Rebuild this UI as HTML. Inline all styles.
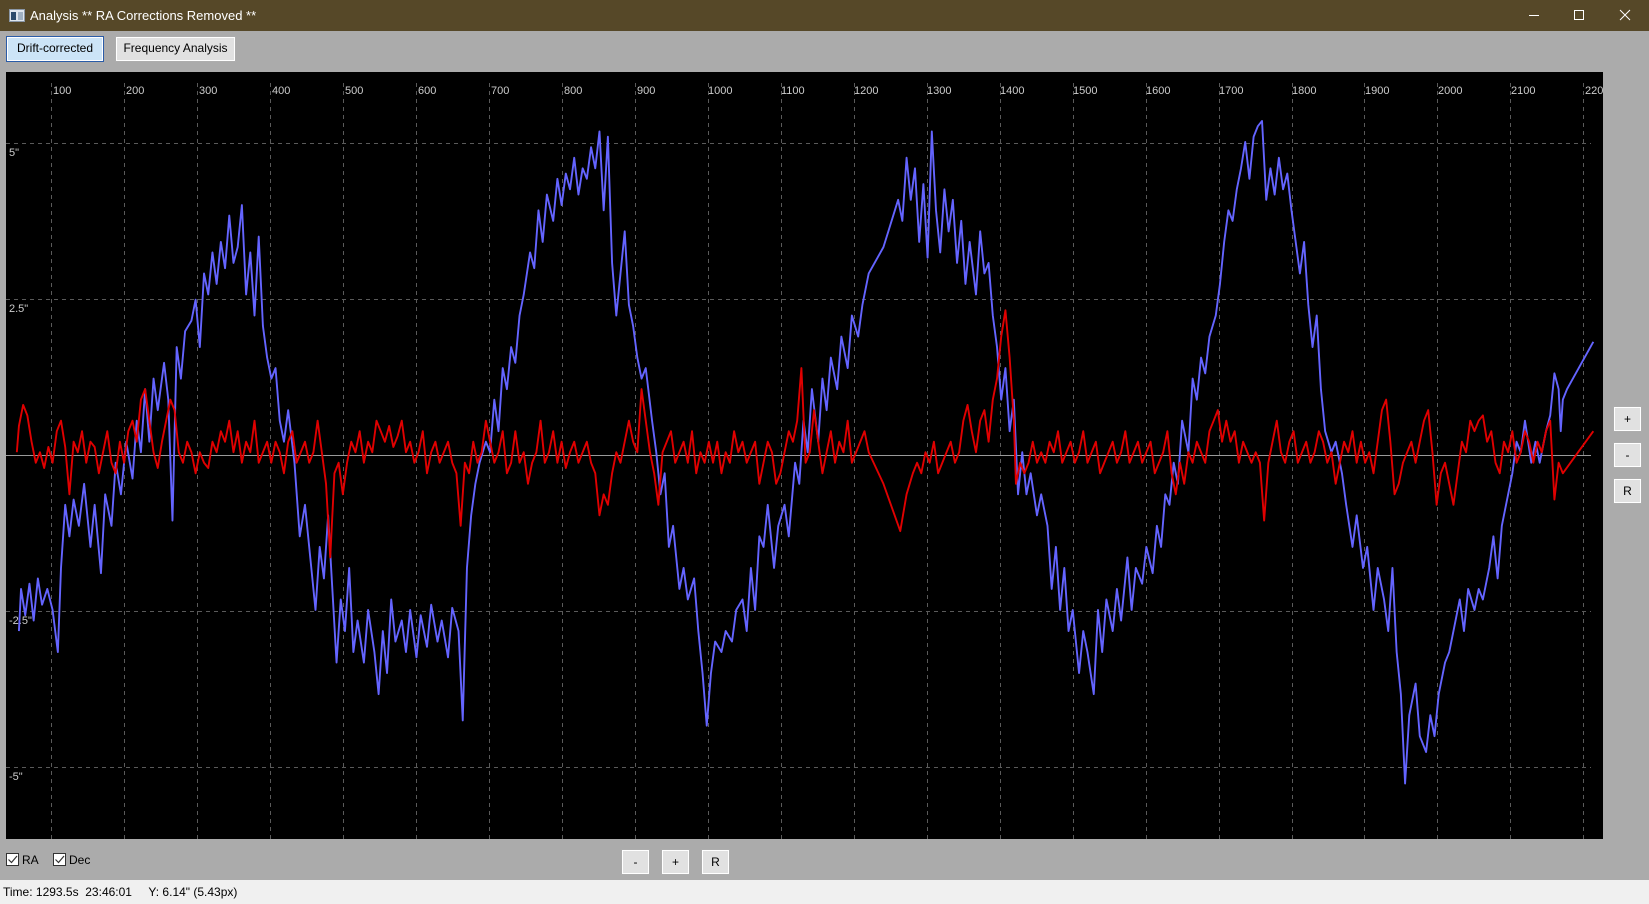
<!DOCTYPE html>
<html><head><meta charset="utf-8"><style>
*{margin:0;padding:0;box-sizing:border-box}
body{width:1649px;height:904px;background:#ababab;position:relative;overflow:hidden;font-family:"Liberation Sans",sans-serif;font-size:12px;color:#000}
.title{position:absolute;left:0;top:0;width:1649px;height:31px;background:#564828;color:#fff;font-size:13px}
.title .t{position:absolute;left:30px;top:8px}
.btn{position:absolute;background:#e1e1e1;border:1px solid #adadad;box-shadow:inset 0 0 0 1px #fff;font-size:12px;text-align:center}
.chart{position:absolute;left:6px;top:72px;width:1597px;height:767px;background:#000}
.status{position:absolute;left:0;top:880px;width:1649px;height:24px;background:#f0f0f0;font-size:12px}
.cb{position:absolute;width:13px;height:13px;border:1px solid #333;background:#fff}
</style></head><body>
<div class="title">
<svg style="position:absolute;left:9px;top:9px" width="16" height="13"><rect x="0.5" y="0.5" width="15" height="12" fill="#dfe6ee" stroke="#8a97a6"/><rect x="2" y="3" width="5" height="8" fill="#2b4a6b"/><rect x="9" y="3" width="5" height="8" fill="#9fb0c2"/></svg>
<span class="t">Analysis ** RA Corrections Removed **</span>
<svg style="position:absolute;left:1520px;top:8px" width="120" height="16" stroke="#fff" fill="none" stroke-width="1"><line x1="9" y1="7.5" x2="19" y2="7.5"/><rect x="54.5" y="2.5" width="9" height="9"/><path d="M100 2 L110 12 M110 2 L100 12"/></svg>
</div>
<div class="btn" style="left:6px;top:36px;width:98px;height:26px;background:#cce4f7;border-color:#2a5ca8;line-height:23px">Drift-corrected</div>
<div class="btn" style="left:115px;top:36px;width:121px;height:26px;line-height:23px">Frequency Analysis</div>
<div class="chart"></div>
<svg style="position:absolute;left:0;top:0" width="1649" height="904">
<g stroke="#5a5a5a" stroke-width="1" stroke-dasharray="4,4" fill="none">
<path d="M51.5 83V839M124.5 83V839M197.5 83V839M270.5 83V839M343.5 83V839M416.5 83V839M489.5 83V839M562.5 83V839M635.5 83V839M708.5 83V839M781.5 83V839M854.5 83V839M927.5 83V839M1000.5 83V839M1073.5 83V839M1146.5 83V839M1219.5 83V839M1292.5 83V839M1364.5 83V839M1437.5 83V839M1510.5 83V839M1583.5 83V839"/>
<path d="M6 143.5H1591M6 299.5H1591M6 611.5H1591M6 767.5H1591"/>
</g>
<line x1="6" y1="455.5" x2="1591" y2="455.5" stroke="#999" stroke-width="1"/>
<g fill="#ccc" font-size="11" font-family="Liberation Sans,sans-serif">
<text x="53" y="94">100</text><text x="126" y="94">200</text><text x="199" y="94">300</text><text x="272" y="94">400</text><text x="345" y="94">500</text><text x="418" y="94">600</text><text x="491" y="94">700</text><text x="564" y="94">800</text><text x="637" y="94">900</text><text x="708" y="94">1000</text><text x="781" y="94">1100</text><text x="854" y="94">1200</text><text x="927" y="94">1300</text><text x="1000" y="94">1400</text><text x="1073" y="94">1500</text><text x="1146" y="94">1600</text><text x="1219" y="94">1700</text><text x="1292" y="94">1800</text><text x="1365" y="94">1900</text><text x="1438" y="94">2000</text><text x="1511" y="94">2100</text><text x="1585" y="94">220</text>
<text x="9" y="156">5"</text><text x="9" y="312">2.5"</text><text x="9" y="624">-2.5"</text><text x="9" y="780">-5"</text>
</g>
<g transform="scale(1.0517)" fill="none" stroke-width="1.8" stroke-linejoin="round">
<path stroke="#6464ff" d="M18 600L20 560L24 585L28 555L32 590L36 550L40 575L45 560L50 580L55 620L58 540L62 480L66 510L70 475L75 500L80 460L86 520L90 480L96 545L100 470L106 500L110 440L115 470L120 420L126 455L130 400L134 430L138 370L142 420L146 360L150 390L156 345L160 380L164 495L168 330L172 360L176 315L182 305L186 285L190 330L194 260L198 280L202 240L206 270L210 230L214 255L218 205L222 250L226 235L230 195L234 280L238 240L242 300L246 225L250 310L254 340L258 360L262 350L266 400L270 420L274 390L280 440L285 510L290 480L296 540L300 580L304 520L308 550L312 490L316 560L320 630L324 570L328 600L332 540L336 620L340 590L346 630L350 580L356 620L360 660L364 600L368 640L372 570L376 610L382 590L386 620L390 580L396 625L400 585L406 615L410 575L416 610L420 590L426 625L430 578L436 600L440 685L444 540L448 490L452 460L456 440L462 420L466 430L470 380L474 410L478 350L482 370L486 330L490 345L494 300L498 280L504 240L508 255L512 200L516 230L520 185L526 210L530 170L534 195L538 165L542 180L546 150L550 185L554 160L558 170L562 140L566 160L570 125L574 200L578 130L582 250L586 300L590 260L594 220L598 290L602 310L606 340L610 360L614 350L620 400L624 430L628 470L632 450L636 520L640 500L646 560L650 540L654 570L660 550L664 600L668 640L672 690L676 640L680 610L686 620L690 600L696 610L700 580L706 570L710 600L714 540L718 580L722 510L726 520L730 480L736 540L740 500L746 480L750 510L756 440L760 460L764 400L768 430L772 370L778 420L782 360L786 390L790 340L796 370L800 320L806 350L810 300L816 320L820 290L826 260L840 235L854 190L858 210L862 150L866 190L870 160L874 230L878 175L882 245L886 125L890 200L894 240L898 180L902 220L906 190L910 250L914 210L918 270L922 230L928 280L932 220L936 260L940 250L944 300L948 330L952 380L956 350L960 410L964 380L968 470L972 430L976 470L980 450L986 490L990 470L996 500L1000 560L1004 520L1008 580L1012 540L1016 600L1020 580L1026 640L1030 600L1034 620L1040 660L1044 580L1048 620L1052 570L1058 600L1062 560L1066 590L1072 530L1076 580L1080 540L1086 555L1090 520L1096 545L1100 500L1104 520L1108 470L1112 480L1116 440L1120 460L1124 400L1130 430L1134 360L1138 380L1142 340L1146 355L1150 320L1156 300L1160 270L1164 230L1168 200L1172 210L1176 180L1180 160L1184 135L1188 170L1192 130L1196 120L1200 115L1204 190L1208 160L1212 185L1216 150L1220 180L1224 165L1228 200L1232 230L1236 260L1240 230L1244 290L1248 330L1252 300L1256 370L1260 410L1266 430L1270 420L1276 450L1280 480L1286 520L1290 490L1296 540L1300 520L1306 580L1310 540L1316 570L1320 600L1324 540L1328 620L1332 660L1336 745L1340 680L1346 650L1350 700L1356 715L1360 680L1364 700L1368 660L1374 630L1378 620L1382 600L1388 570L1392 600L1396 560L1402 580L1406 560L1410 570L1416 540L1420 510L1424 550L1428 500L1432 480L1438 450L1442 420L1446 430L1450 400L1456 440L1460 420L1464 440L1470 410L1474 395L1478 355L1482 370L1484 410L1486 380L1490 370L1515 325"/>
<path stroke="#e00000" d="M16 430L18 405L22 385L26 395L30 420L34 440L38 430L42 445L46 425L50 440L54 410L58 400L62 425L66 470L70 420L74 430L78 410L82 440L86 420L90 425L94 450L98 430L102 410L106 440L110 450L114 420L118 440L122 410L126 400L130 420L134 380L138 370L142 400L146 430L150 445L154 420L158 400L162 380L166 390L170 430L174 440L178 420L182 430L186 450L190 430L194 440L198 445L202 420L206 430L210 410L214 420L218 400L222 430L226 410L230 440L234 420L238 430L242 400L246 440L250 430L254 420L258 440L262 420L266 430L270 450L274 420L278 410L282 440L286 430L290 420L294 440L298 430L302 400L306 430L310 460L314 530L318 450L322 440L326 470L330 440L334 420L338 430L342 410L346 440L350 420L354 430L358 400L362 410L366 420L370 405L374 425L378 415L382 400L386 430L390 420L394 440L398 430L402 410L406 450L410 430L414 420L418 440L422 430L426 420L430 440L434 450L438 500L442 440L446 450L450 420L454 440L458 430L462 400L466 420L470 440L474 430L478 410L482 450L486 440L490 410L494 440L498 430L502 460L506 440L510 430L514 400L518 440L522 430L526 410L530 440L534 420L538 445L542 430L546 420L550 440L554 430L558 420L562 440L566 450L570 490L574 470L578 480L582 450L586 430L590 440L594 420L598 400L602 420L606 430L610 370L614 400L618 430L622 450L626 480L630 430L634 420L638 410L642 440L646 430L650 420L654 440L658 410L662 450L666 430L670 440L674 420L678 440L682 420L686 450L690 430L694 440L698 410L702 430L706 420L710 440L714 430L718 420L722 460L726 440L730 420L734 430L738 460L742 450L746 430L750 410L754 420L758 400L762 350L766 440L770 430L774 390L778 420L782 450L786 430L790 410L794 440L798 420L802 430L806 400L810 440L814 430L818 420L822 410L826 430L840 460L856 505L862 470L868 450L872 440L876 450L880 430L884 440L888 420L892 450L896 440L900 430L904 420L908 440L912 430L916 400L920 385L924 410L928 430L932 400L936 390L940 420L944 380L948 360L952 320L956 295L960 340L964 400L966 460L970 440L974 450L978 440L982 420L986 440L990 430L994 440L998 420L1002 430L1006 410L1010 440L1014 430L1018 420L1022 440L1026 430L1030 410L1034 440L1038 430L1042 420L1046 450L1050 440L1054 430L1058 420L1062 440L1066 430L1070 410L1074 440L1078 430L1082 420L1086 440L1090 430L1094 420L1098 450L1102 440L1106 430L1110 410L1114 450L1118 470L1122 440L1126 460L1130 430L1134 440L1138 420L1142 430L1146 440L1150 410L1154 400L1158 390L1162 420L1166 400L1170 420L1174 410L1178 440L1182 420L1186 430L1190 440L1194 430L1198 440L1202 495L1206 440L1210 420L1214 400L1218 430L1222 440L1226 420L1230 410L1234 440L1238 430L1242 420L1246 440L1250 430L1254 410L1258 420L1262 440L1266 430L1270 460L1274 440L1278 420L1282 430L1286 410L1290 440L1294 420L1298 440L1302 430L1306 450L1310 420L1314 390L1318 380L1322 420L1326 470L1330 460L1334 440L1338 430L1342 420L1346 440L1350 420L1354 400L1358 390L1362 430L1366 480L1370 450L1374 440L1378 460L1382 480L1386 450L1390 420L1394 430L1398 400L1402 410L1406 400L1410 395L1414 420L1418 410L1422 440L1426 450L1430 420L1434 430L1438 410L1442 440L1446 430L1450 410L1454 420L1458 440L1462 420L1466 430L1470 410L1474 400L1478 475L1482 440L1486 450L1515 410"/>
</g>
</svg>
<div class="btn" style="left:1613px;top:406px;width:29px;height:26px;line-height:24px">+</div>
<div class="btn" style="left:1613px;top:442px;width:29px;height:26px;line-height:24px">-</div>
<div class="btn" style="left:1613px;top:478px;width:29px;height:26px;line-height:24px">R</div>
<div class="cb" style="left:6px;top:853px"><svg width="11" height="11" style="position:absolute;left:0;top:0"><path d="M1.5 5.5L4.5 8.5L10 2" stroke="#333" fill="none" stroke-width="1.2"/></svg></div>
<span style="position:absolute;left:22px;top:853px">RA</span>
<div class="cb" style="left:53px;top:853px"><svg width="11" height="11" style="position:absolute;left:0;top:0"><path d="M1.5 5.5L4.5 8.5L10 2" stroke="#333" fill="none" stroke-width="1.2"/></svg></div>
<span style="position:absolute;left:69px;top:853px">Dec</span>
<div class="btn" style="left:621px;top:849px;width:29px;height:26px;line-height:24px">-</div>
<div class="btn" style="left:661px;top:849px;width:29px;height:26px;line-height:24px">+</div>
<div class="btn" style="left:701px;top:849px;width:29px;height:26px;line-height:24px">R</div>
<div class="status"><span style="position:absolute;left:3px;top:5px">Time: 1293.5s&nbsp; 23:46:01&nbsp;&nbsp;&nbsp;&nbsp; Y: 6.14" (5.43px)</span></div>
</body></html>
